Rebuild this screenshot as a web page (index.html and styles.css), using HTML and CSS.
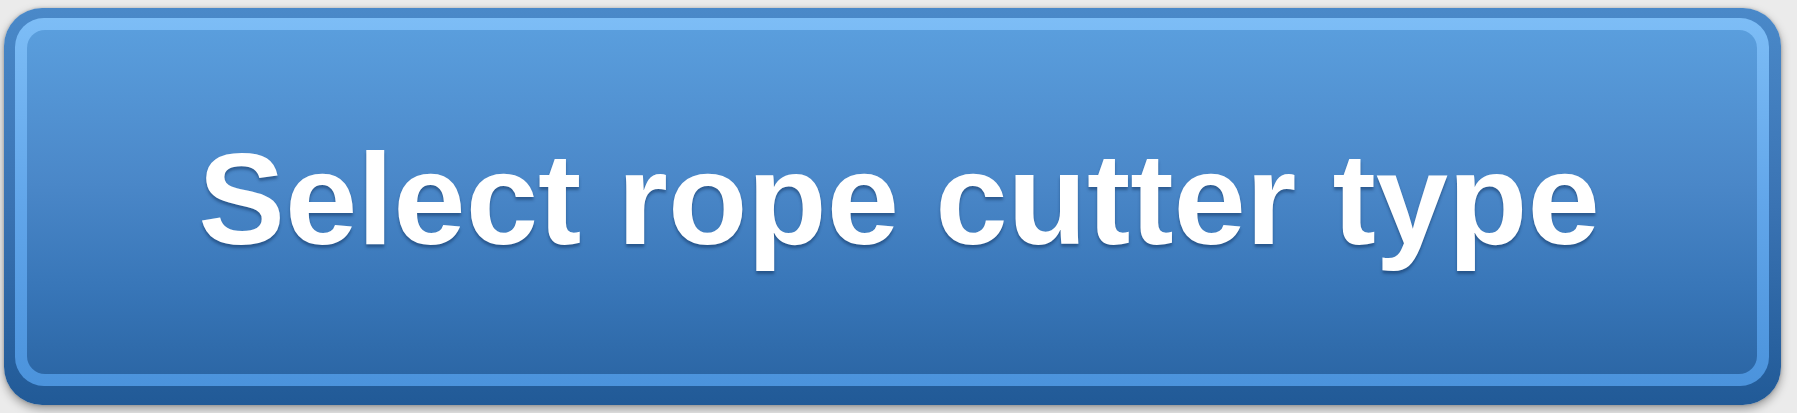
FILE: index.html
```html
<!DOCTYPE html>
<html lang="en">
<head>
  <meta charset="UTF-8" />
  <meta name="viewport" content="width=device-width, initial-scale=1.0" />
  <title>Rope Cutter</title>
  <link rel="stylesheet" href="styles.css">
</head>
<body>

<div class="wrap">
  <button class="select-btn" type="button">
    <span class="ring">
      <span class="face">Select rope cutter type</span>
    </span>
  </button>
</div>

</body>
</html>
```

FILE: styles.css
```css
/* Page */
body {
  margin: 0;
  padding: 0;
  background-color: #ebebeb;
  font-family: "Liberation Sans", Arial, sans-serif;
}

.wrap {
  padding: 8px 16px 8px 4px;
}

/* Button - outer dark rim */
.select-btn {
  display: block;
  width: 1777px;
  height: 397px;
  padding: 10px 12px 19px 11px;
  border: none;
  border-radius: 38px;
  background: linear-gradient(to bottom, #4a89c9 0%, #3a73b3 50%, #215a97 100%);
  box-shadow: 0 4px 10px rgba(0, 0, 0, 0.35), 0 0 3px rgba(0, 0, 0, 0.2);
  box-sizing: border-box;
  cursor: pointer;
  font-family: inherit;
}

/* Light inner ring */
.ring {
  display: flex;
  height: 100%;
  padding: 12px;
  border-radius: 29px;
  background: linear-gradient(to bottom, #7dbdf6 0%, #62a6ea 50%, #4b93dc 100%);
  box-sizing: border-box;
}

/* Face */
.face {
  flex: 1;
  display: flex;
  align-items: center;
  justify-content: center;
  border-radius: 18px;
  background: linear-gradient(to bottom, #5a9edd 0%, #4a87c8 45%, #3876b8 75%, #2c67a6 100%);
  color: #ffffff;
  font-size: 130px;
  font-weight: bold;
  padding: 0 0 6px 14px;
  text-shadow: 0 3px 3px rgba(10, 40, 80, 0.45);
}
```
